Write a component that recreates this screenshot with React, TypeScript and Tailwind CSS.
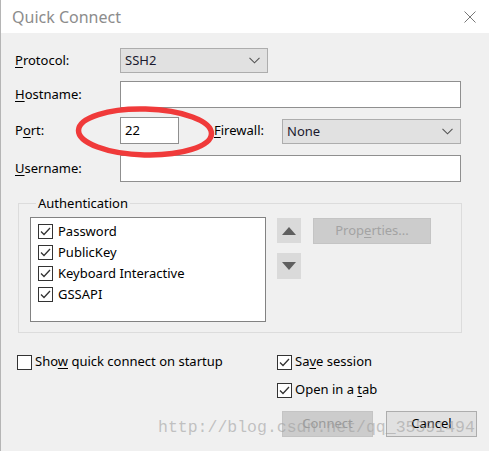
import React from "react";

const font = "font-['Segoe_UI','Noto_Sans','Open_Sans',sans-serif]";

function Mn({ children }: { children: React.ReactNode }) {
  return <span className="underline underline-offset-2 decoration-1">{children}</span>;
}

function Check({ checked }: { checked: boolean }) {
  return (
    <span className="w-[15px] h-[15px] border border-[#333333] bg-white flex items-center justify-center shrink-0">
      {checked && (
        <svg width="11" height="9" viewBox="0 0 11 9">
          <path d="M1 4.5 L4 7.5 L10 1" fill="none" stroke="#333333" strokeWidth="1.3" />
        </svg>
      )}
    </span>
  );
}

function Chevron() {
  return (
    <svg width="11" height="7" viewBox="0 0 11 7">
      <path d="M0.5 0.8 L5.5 5.8 L10.5 0.8" fill="none" stroke="#555555" strokeWidth="1.1" />
    </svg>
  );
}

function Label({ children }: { children: React.ReactNode }) {
  return <div className="w-[105px] shrink-0 text-[13px] text-black">{children}</div>;
}

export default function App() {
  const methods = ["Password", "PublicKey", "Keyboard Interactive", "GSSAPI"];
  return (
    <div className={`relative w-[489px] h-[451px] bg-[#f0f0f0] border-l border-[#b5b5b5] overflow-hidden ${font}`}>
      {/* title bar */}
      <div className="h-[33px] bg-white flex items-center justify-between pl-[11px] pr-[13px]">
        <span className="text-[16px] text-[#8c8c8c]">Quick Connect</span>
        <svg width="12" height="12" viewBox="0 0 12 12">
          <path d="M0.5 0.5 L11.5 11.5 M11.5 0.5 L0.5 11.5" stroke="#777777" strokeWidth="1" />
        </svg>
      </div>

      <div className="pl-[14px] pr-[27px]">
        <div className="mt-[15px] flex items-center h-[25px]">
          <Label>
            <Mn>P</Mn>rotocol:
          </Label>
          <div className="w-[148px] h-[25px] bg-[#e1e1e1] border border-[#adadad] flex items-center justify-between pl-[4px] pr-[7px] text-[13px] text-[#1a1a2e]">
            <span>SSH2</span>
            <Chevron />
          </div>
        </div>

        <div className="mt-[8px] flex items-center h-[27px]">
          <Label>
            <Mn>H</Mn>ostname:
          </Label>
          <div className="w-[341px] h-[27px] bg-white border border-[#8f8f8f]" />
        </div>

        <div className="mt-[9px] flex items-center h-[27px]">
          <Label>
            P<Mn>o</Mn>rt:
          </Label>
          <div className="w-[59px] h-[27px] bg-white border border-[#8f8f8f] flex items-center pl-[4px] text-[13px] text-black">
            22
          </div>
          <div className="ml-[35px] w-[68px] text-[13px] text-black">
            <Mn>F</Mn>irewall:
          </div>
          <div className="mt-[2px] w-[179px] h-[25px] bg-[#e1e1e1] border border-[#adadad] flex items-center justify-between pl-[4px] pr-[7px] text-[13px] text-[#1a1a2e]">
            <span>None</span>
            <Chevron />
          </div>
        </div>

        <div className="mt-[11px] flex items-center h-[27px]">
          <Label>
            <Mn>U</Mn>sername:
          </Label>
          <div className="w-[341px] h-[27px] bg-white border border-[#8f8f8f]" />
        </div>

        <fieldset className="mt-[13px] ml-[3px] w-[444px] h-[138px] border border-[#dcdcdc] pl-[11px]">
          <legend className="ml-[6px] px-[2px] text-[13px] text-black leading-[17px]">Authentication</legend>
          <div className="mt-[5px] flex items-start">
            <div className="w-[236px] h-[105px] bg-white border border-[#828282] pt-[6px] pl-[7px] flex flex-col gap-[6px]">
              {methods.map((m) => (
                <div key={m} className="flex items-center gap-[5px] h-[15px] text-[13px] text-black">
                  <Check checked />
                  <span>{m}</span>
                </div>
              ))}
            </div>
            <div className="ml-[11px] flex flex-col gap-[10px] pt-[1px]">
              <div className="w-[24px] h-[25px] bg-[#dadada] flex items-center justify-center">
                <svg width="14" height="8" viewBox="0 0 14 8">
                  <path d="M0 8 L7 0 L14 8 Z" fill="#5f5f5f" />
                </svg>
              </div>
              <div className="w-[24px] h-[26px] bg-[#dadada] flex items-center justify-center">
                <svg width="14" height="8" viewBox="0 0 14 8">
                  <path d="M0 0 L7 8 L14 0 Z" fill="#5f5f5f" />
                </svg>
              </div>
            </div>
            <div className="ml-[12px] mt-[1px] w-[118px] h-[26px] bg-[#cccccc] border border-[#c4c4c4] flex items-center justify-center text-[13px] text-[#a3a3a3]">
              Prop<Mn>e</Mn>rties...
            </div>
          </div>
        </fieldset>

        <div className="mt-[21px] flex">
          <div className="w-[260px] flex items-center gap-[3px] h-[16px] ml-[2px] text-[13px] text-black">
            <Check checked={false} />
            <span>
              Sho<Mn>w</Mn> quick connect on startup
            </span>
          </div>
          <div className="flex flex-col gap-[12px]">
            <div className="flex items-center gap-[3px] h-[16px] text-[13px] text-black">
              <Check checked />
              <span>
                Sa<Mn>v</Mn>e session
              </span>
            </div>
            <div className="flex items-center gap-[3px] h-[16px] text-[13px] text-black">
              <Check checked />
              <span>
                Open in a <Mn>t</Mn>ab
              </span>
            </div>
          </div>
        </div>

        <div className="mt-[13px] flex justify-end gap-[13px] mr-[-15px]">
          <div className="w-[91px] h-[26px] bg-[#cccccc] border border-[#c4c4c4] flex items-center justify-center text-[13px] text-[#9a9a9a]">
            Connect
          </div>
          <div className="w-[91px] h-[26px] bg-[#e1e1e1] border border-[#adadad] flex items-center justify-center text-[13px] text-black">
            Cancel
          </div>
        </div>
      </div>

      {/* red annotation ellipse */}
      <svg className="absolute left-0 top-0 pointer-events-none" width="489" height="451">
        <ellipse cx="144" cy="132" rx="66.5" ry="23" fill="none" stroke="#f03a3a" strokeWidth="5.5" transform="rotate(1.5 144 132)" />
      </svg>

      {/* watermark */}
      <div className="absolute left-[157px] top-[416px] text-[16.5px] text-[#a0a0a0]/60 font-['Liberation_Mono','DejaVu_Sans_Mono',monospace] pointer-events-none whitespace-nowrap">
        http://blog.csdn.net/qq_35591494
      </div>
    </div>
  );
}
